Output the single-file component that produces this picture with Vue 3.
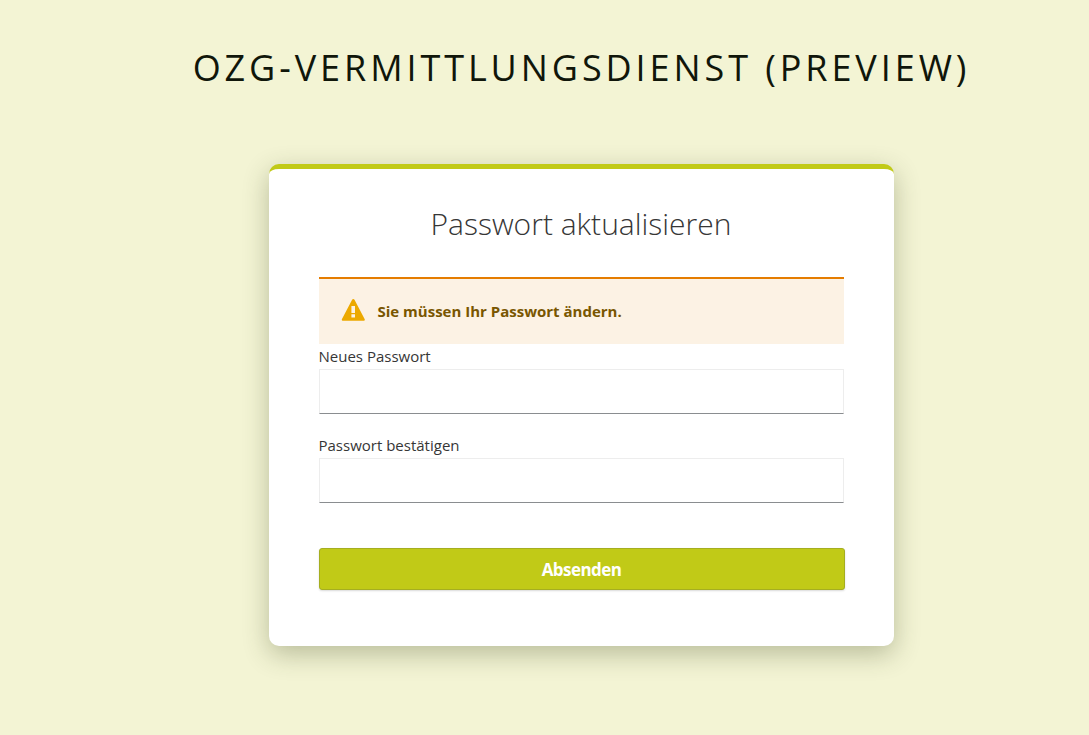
<template>
  <div class="page">
    <header>OZG-Vermittlungsdienst (Preview)</header>
    <main class="card">
      <h1>Passwort aktualisieren</h1>
      <div class="alert">
        <svg width="24" height="22" viewBox="0 0 24 22"><path fill="#eca900" fill-rule="evenodd" d="M12.300 0c.5 0 .9.3 1.200.8L23.600 20c.5.900 0 1.700-1 1.700H2c-1 0-1.500-.8-1-1.700L11.100.8c.3-.5.700-.8 1.200-.8ZM10.400 7v7h3.600V7ZM10.400 15.300v3.200h3.600v-3.200Z"/></svg>
        <span>Sie müssen Ihr Passwort ändern.</span>
      </div>
      <form @submit.prevent>
        <label for="password-new">Neues Passwort</label>
        <input id="password-new" type="password">
        <label for="password-confirm">Passwort bestätigen</label>
        <input id="password-confirm" type="password">
        <button type="submit">Absenden</button>
      </form>
    </main>
  </div>
</template>

<script setup>
</script>

<style>
html, body { background: #f3f4d4; }
</style>
<style scoped>
* { box-sizing: border-box; }
.page { height: 735px; padding-left: 73px; overflow: hidden; background: #f3f4d4; font-family: "Open Sans", sans-serif; color: #363636; }
header { height: 164px; padding: 42px 0 0 1px; text-align: center; text-transform: uppercase; font-size: 36px; line-height: 51px; letter-spacing: 3.920px; color: #10160a; white-space: nowrap; }
.card { width: 625px; height: 482px; margin: 0 auto; padding: 35px 50px 0; border-top: 5px solid #c1ca17; border-radius: 10px; background: #fff; box-shadow: 0 8px 26px rgba(50,60,20,.3); }
h1 { margin: 0; height: 73px; font-size: 30px; line-height: 40px; font-weight: 300; text-align: center; color: #363636; }
.alert { display: flex; align-items: center; height: 67px; padding: 0 0 3px 22px; border-top: 2px solid #e57c00; background: #fcf2e4; color: #795600; font-size: 15px; font-weight: 700; }
.alert span { margin-left: 13px; padding-top: 1px; }
label { display: block; height: 25px; line-height: 25px; font-size: 15px; }
input { display: block; width: 100%; height: 45px; margin: 0 0 19px; padding: 6px 8px; border: 1px solid #ededed; border-bottom-color: #8a8d90; border-radius: 0; background: #fff; font: inherit; }
button { display: block; width: 526px; height: 42px; margin-top: 45px; padding: 1px 0 0; border: 1px solid #a5ae20; border-radius: 3px; background: #c1ca17; box-shadow: 0 1px 2px rgba(0,0,0,.15); color: #fff; font: 700 17px/40px "Open Sans", sans-serif; letter-spacing: -.55px; }
</style>
